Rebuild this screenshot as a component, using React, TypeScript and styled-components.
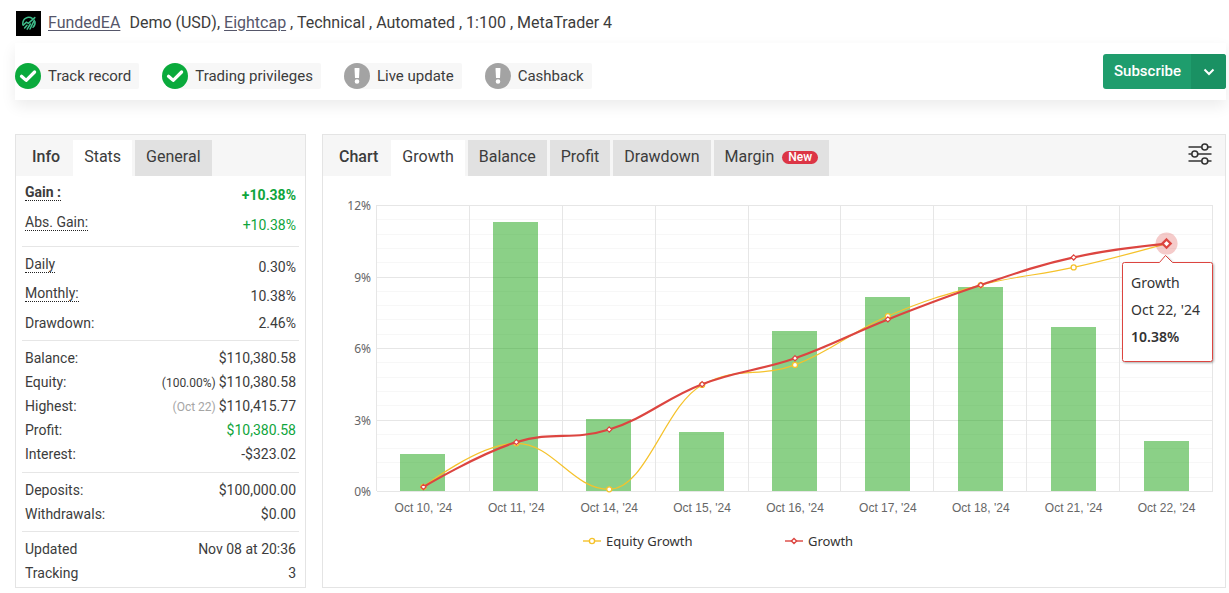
import React from "react";
import styled, { createGlobalStyle, css } from "styled-components";

const GlobalStyle = createGlobalStyle`
  * { box-sizing: border-box; }
  body {
    margin: 0;
    background: #fff;
    color: #3c3c3c;
    font-family: Roboto, "Liberation Sans", sans-serif;
    font-size: 14px;
  }
  button { font: inherit; color: inherit; border: 0; background: none; padding: 0; cursor: pointer; }
`;

const Page = styled.div`
  padding: 0 3px 5px 15px;
`;

const AccountHeader = styled.header`
  display: flex;
  align-items: center;
  height: 43px;
  padding: 3px 0 0 1px;
  font-size: 16px;
  line-height: 20px;
`;

const Summary = styled.p`
  margin: 0;
`;

const AccountLink = styled.a`
  color: #55566a;
  text-decoration: underline;
  text-underline-offset: 2px;
`;

const AccountName = styled(AccountLink)`
  margin: 0 9px 0 7px;
`;

const StatusBar = styled.section`
  display: flex;
  align-items: flex-end;
  justify-content: space-between;
  padding: 11px 0;
  background: #fff;
  box-shadow: 0 6px 14px rgba(0, 0, 0, 0.08);
`;

const Badges = styled.ul`
  display: flex;
  gap: 23px;
  list-style: none;
  margin: 0;
  padding: 0;
`;

const Badge = styled.li`
  display: flex;
  align-items: center;
  gap: 7px;
  height: 26px;
  padding-right: 8px;
  font-size: 15px;
  background: #f7f7f7;
  border-radius: 13px 2px 2px 13px;
`;

const SplitButton = styled.div`
  display: flex;
  height: 35px;
  border-radius: 3px;
  overflow: hidden;
  color: #fff;
  background: #1f9d6d;
`;

const SubscribeButton = styled.button`
  padding: 0 10px 2px 11px;
  font-size: 15px;
  font-weight: 500;
`;

const SubscribeMenu = styled.button`
  display: grid;
  place-items: center;
  width: 35px;
  background: #1a9163;
`;

const Panels = styled.main`
  display: flex;
  gap: 16px;
  margin-top: 34px;
`;

const Panel = styled.section<{ $fixed?: boolean }>`
  ${(p) => (p.$fixed ? css`flex: 0 0 291px;` : css`flex: 1; min-width: 0;`)}
  border: 1px solid #e4e4e4;
`;

const PanelHead = styled.div`
  display: flex;
  align-items: flex-end;
  gap: 3px;
  height: 41px;
  padding: 5px 13px 0 16px;
  background: #f6f6f6;
  font-size: 16px;
`;

const PanelTitle = styled.h2`
  margin: 0 10px 0 0;
  font-size: 16px;
  font-weight: 500;
  line-height: 34px;
  align-self: flex-start;
`;

const Tab = styled.button<{ $active?: boolean }>`
  display: flex;
  align-items: center;
  height: 36px;
  padding: 0 11px 3px;
  background: ${(p) => (p.$active ? "#fff" : "#e1e1e1")};
`;

const NewPill = styled.span`
  margin: 2px 0 0 8px;
  padding: 0 6px;
  border-radius: 7px;
  background: #dc3545;
  color: #fff;
  font-size: 12px;
  font-weight: 500;
  line-height: 13px;
`;

const SettingsButton = styled.button`
  align-self: flex-start;
  margin: 2px 0 0 auto;
  height: 28px;
`;

const Stats = styled.div`
  padding: 1px 6px 2px;
`;

const Group = styled.dl<{ $row: number; $top: number; $bottom: number }>`
  margin: 0;
  padding: ${(p) => p.$top}px 3px ${(p) => p.$bottom}px 3px;
  & + & { border-top: 1px solid #e6e6e6; }
  > div { height: ${(p) => p.$row}px; }
`;

const Row = styled.div<{ $strong?: boolean }>`
  display: flex;
  align-items: center;
  justify-content: space-between;
  line-height: 16px;
  font-weight: ${(p) => (p.$strong ? 700 : 400)};
`;

const Label = styled.dt<{ $hint?: boolean }>`
  border-bottom: ${(p) => (p.$hint ? "1px dotted #222" : "0")};
`;

const Value = styled.dd<{ $green?: boolean; $drop?: number }>`
  margin: 0;
  padding-top: ${(p) => p.$drop ?? 0}px;
  color: ${(p) => (p.$green ? "#0fa53c" : "inherit")};
`;

const Note = styled.small<{ $muted?: boolean }>`
  font-size: 12px;
  color: ${(p) => (p.$muted ? "#a5a5a5" : "inherit")};
`;

const ChartSvg = styled.svg`
  display: block;
  width: 100%;
  height: auto;
`;

const AxisText = styled.text`
  font-family: "Liberation Sans", sans-serif;
  font-size: 12px;
  fill: #666;
`;

const PercentText = styled(AxisText)`
  font-family: "Noto Sans", sans-serif;
`;

const TipText = styled.text<{ $bold?: boolean }>`
  font-family: "Noto Sans", sans-serif;
  font-size: 14px;
  font-weight: ${(p) => (p.$bold ? 600 : 400)};
  fill: #333;
`;

const Legend = styled.div`
  display: flex;
  justify-content: center;
  padding: 10px 0 0 22px;
`;

const LegendItem = styled.button`
  display: flex;
  align-items: center;
  gap: 5px;
  width: 202px;
  font-family: "Noto Sans", sans-serif;
  font-size: 13px;
  line-height: 20px;
  color: #333;
`;

type Item = {
  label: string;
  value: string;
  note?: string;
  muted?: boolean;
  green?: boolean;
  strong?: boolean;
  hint?: boolean;
  drop?: number;
};

const groups: { row: number; top: number; bottom: number; items: Item[] }[] = [
  {
    row: 30, top: 0, bottom: 9,
    items: [
      { label: "Gain :", value: "+10.38%", green: true, strong: true, hint: true, drop: 6 },
      { label: "Abs. Gain:", value: "+10.38%", green: true, hint: true, drop: 6 },
    ],
  },
  {
    row: 29, top: 3, bottom: 3,
    items: [
      { label: "Daily", value: "0.30%", hint: true, drop: 4 },
      { label: "Monthly:", value: "10.38%", hint: true, drop: 4 },
      { label: "Drawdown:", value: "2.46%" },
    ],
  },
  {
    row: 24, top: 5, bottom: 6,
    items: [
      { label: "Balance:", value: "$110,380.58" },
      { label: "Equity:", value: "$110,380.58", note: "(100.00%)" },
      { label: "Highest:", value: "$110,415.77", note: "(Oct 22)", muted: true },
      { label: "Profit:", value: "$10,380.58", green: true },
      { label: "Interest:", value: "-$323.02" },
    ],
  },
  {
    row: 24, top: 5, bottom: 5,
    items: [
      { label: "Deposits:", value: "$100,000.00" },
      { label: "Withdrawals:", value: "$0.00" },
    ],
  },
  {
    row: 24, top: 5, bottom: 0,
    items: [
      { label: "Updated", value: "Nov 08 at 20:36" },
      { label: "Tracking", value: "3" },
    ],
  },
];

const days = [10, 11, 14, 15, 16, 17, 18, 21, 22];
const bars = [1.55, 11.3, 3.02, 2.46, 6.73, 8.15, 8.56, 6.88, 2.1];
const growth = [0.17, 2.05, 2.58, 4.48, 5.57, 7.2, 8.64, 9.8, 10.38];
const equity = [0.17, 2.0, 0.07, 4.45, 5.29, 7.34, 8.64, 9.38, 10.38];

const plot = { left: 54, right: 890, top: 29, bottom: 315 };
const step = (plot.right - plot.left) / days.length;
const xOf = (i: number) => plot.left + step * (i + 0.5);
const yOf = (v: number) => plot.bottom - (v / 12) * (plot.bottom - plot.top);
const crisp = (n: number) => Math.round(n) + 0.5;

/* Smooth curve through the points that never overshoots a neighbour. */
function spline(values: number[]) {
  const pts = values.map((v, i) => ({ x: xOf(i), y: yOf(v) }));
  let out = { ...pts[0] };
  let d = `M${pts[0].x} ${pts[0].y}`;
  for (let i = 1; i < pts.length; i++) {
    const p = pts[i];
    const prev = pts[i - 1];
    const next = pts[i + 1];
    let left = { ...p };
    let right = { ...p };
    if (next) {
      left = { x: (1.5 * p.x + prev.x) / 2.5, y: (1.5 * p.y + prev.y) / 2.5 };
      right = { x: (1.5 * p.x + next.x) / 2.5, y: (1.5 * p.y + next.y) / 2.5 };
      const fix = ((right.y - left.y) * (right.x - p.x)) / (right.x - left.x) + p.y - right.y;
      left.y += fix;
      right.y += fix;
      const clampLeft = Math.min(Math.max(left.y, Math.min(prev.y, p.y)), Math.max(prev.y, p.y));
      if (clampLeft !== left.y) {
        left.y = clampLeft;
        right.y = 2 * p.y - left.y;
      }
      const clampRight = Math.min(Math.max(right.y, Math.min(next.y, p.y)), Math.max(next.y, p.y));
      if (clampRight !== right.y) {
        right.y = clampRight;
        left.y = 2 * p.y - right.y;
      }
    }
    d += `C${out.x} ${out.y} ${left.x} ${left.y} ${p.x} ${p.y}`;
    out = right;
  }
  return d;
}

const diamond = (x: number, y: number, r: number) =>
  `M${x} ${y - r}L${x + r} ${y}L${x} ${y + r}L${x - r} ${y}Z`;

const RED = "#dc4540";
const YELLOW = "#f5c22b";

function GrowthChart() {
  const last = days.length - 1;
  const lx = xOf(last);
  const ly = yOf(growth[last]);
  return (
    <ChartSvg viewBox="0 0 902 345" role="img" aria-label="Growth chart">
      {Array.from({ length: 21 }, (_, k) => {
        const y = crisp(plot.top + (k * (plot.bottom - plot.top)) / 20);
        return (
          <path key={k} d={`M${plot.left} ${y}H${plot.right}`} stroke={k % 5 ? "#f7f7f7" : "#e6e6e6"} />
        );
      })}
      {Array.from({ length: 10 }, (_, k) => (
        <path key={k} d={`M${crisp(plot.left + k * step) - 1} ${plot.top}V${plot.bottom}`} stroke="#e6e6e6" />
      ))}
      {[12, 9, 6, 3, 0].map((v) => (
        <PercentText key={v} x={48} y={yOf(v) + 5} textAnchor="end">{`${v}%`}</PercentText>
      ))}
      {bars.map((v, i) => (
        <rect
          key={i}
          x={Math.round(xOf(i) - 23)}
          y={Math.round(yOf(v))}
          width={45}
          height={plot.bottom - Math.round(yOf(v))}
          fill="#17a10f"
          opacity={0.5}
        />
      ))}
      {days.map((d, i) => (
        <AxisText key={d} x={xOf(i)} y={336} textAnchor="middle">{`Oct ${d}, '24`}</AxisText>
      ))}
      <path d={spline(equity)} fill="none" stroke={YELLOW} strokeWidth={1.2} />
      {equity.map((v, i) => (
        <circle key={i} cx={xOf(i)} cy={yOf(v)} r={2.5} fill="#fff" stroke={YELLOW} strokeWidth={1.3} />
      ))}
      <path d={spline(growth)} fill="none" stroke={RED} strokeWidth={2.2} />
      {growth.slice(0, last).map((v, i) => (
        <path key={i} d={diamond(xOf(i), yOf(v), 2.6)} fill="#fff" stroke={RED} strokeWidth={1.2} />
      ))}
      <circle cx={lx} cy={ly} r={11} fill={RED} opacity={0.28} />
      <path d={diamond(lx, ly, 4.2)} fill="#fff" stroke={RED} strokeWidth={2.2} />
      <g>
        <path
          d="M801.5 86.5H836.5L842.5 79.5L849.5 86.5H887.5Q889.5 86.5 889.5 88.5V183.5Q889.5 185.5 887.5 185.5H801.5Q799.5 185.5 799.5 183.5V88.5Q799.5 86.5 801.5 86.5Z"
          fill="#fff"
          stroke={RED}
          filter="drop-shadow(1px 1px 1px rgba(0,0,0,0.3))"
        />
        <TipText x={808} y={112}>Growth</TipText>
        <TipText x={808} y={139}>Oct 22, '24</TipText>
        <TipText x={808} y={166} $bold>10.38%</TipText>
      </g>
    </ChartSvg>
  );
}

function StatusIcon({ ok }: { ok: boolean }) {
  return (
    <svg width="26" height="26" viewBox="0 0 26 26" aria-hidden="true">
      <circle cx="13" cy="13" r="13" fill={ok ? "#0aaa3c" : "#a3a3a3"} />
      {ok ? (
        <path d="M6.5 13.2L11.2 17.4L19.6 9" fill="none" stroke="#fff" strokeWidth="3.2" strokeLinecap="round" strokeLinejoin="round" />
      ) : (
        <path d="M10.5 5.5Q10.5 5 11 5H15Q15.5 5 15.5 5.5L15 15H11ZM13 16.2A2.3 2.3 0 1 1 13 20.8A2.3 2.3 0 1 1 13 16.2Z" fill="#fff" />
      )}
    </svg>
  );
}

function Logo() {
  return (
    <svg width="25" height="25" viewBox="0 0 25 25" role="img" aria-label="FundedEA logo">
      <rect width="25" height="25" fill="#000" />
      <g fill="none" stroke="#3fbf8c" strokeWidth="1.5" strokeLinecap="round">
        <path d="M16.2 7.4A6 6 0 0 0 6.8 12.5V13.6" />
        <path d="M7.2 14.2L10.4 11.2L12.4 12.4L18.8 6.6" />
        <path d="M8.6 17L11 14.2" />
        <path d="M11.2 18.2L14.4 13" />
        <path d="M14 18L18.4 9.2" />
        <path d="M17 16.2A6 6 0 0 0 18.9 10.4" />
      </g>
    </svg>
  );
}

const badges = [
  { text: "Track record", ok: true },
  { text: "Trading privileges", ok: true },
  { text: "Live update", ok: false },
  { text: "Cashback", ok: false },
];

export default function App() {
  return (
    <>
      <GlobalStyle />
      <Page>
        <AccountHeader>
          <Logo />
          <AccountName href="#">FundedEA</AccountName>
          <Summary>
            Demo (USD), <AccountLink href="#">Eightcap</AccountLink> , Technical , Automated , 1:100 , MetaTrader 4
          </Summary>
        </AccountHeader>
        <StatusBar>
          <Badges>
            {badges.map((b) => (
              <Badge key={b.text}>
                <StatusIcon ok={b.ok} />
                {b.text}
              </Badge>
            ))}
          </Badges>
          <SplitButton>
            <SubscribeButton type="button">Subscribe</SubscribeButton>
            <SubscribeMenu type="button" aria-label="More subscribe options">
              <svg width="12" height="8" viewBox="0 0 12 8" aria-hidden="true">
                <path d="M1.5 1.5L6 6L10.5 1.5" fill="none" stroke="#fff" strokeWidth="2" />
              </svg>
            </SubscribeMenu>
          </SplitButton>
        </StatusBar>
        <Panels>
          <Panel $fixed>
            <PanelHead>
              <PanelTitle>Info</PanelTitle>
              <Tab type="button" $active>Stats</Tab>
              <Tab type="button">General</Tab>
            </PanelHead>
            <Stats>
              {groups.map((g, i) => (
                <Group key={i} $row={g.row} $top={g.top} $bottom={g.bottom}>
                  {g.items.map((it) => (
                    <Row key={it.label} $strong={it.strong}>
                      <Label $hint={it.hint}>{it.label}</Label>
                      <Value $green={it.green} $drop={it.drop}>
                        {it.note && <Note $muted={it.muted}>{it.note} </Note>}
                        {it.value}
                      </Value>
                    </Row>
                  ))}
                </Group>
              ))}
            </Stats>
          </Panel>
          <Panel>
            <PanelHead>
              <PanelTitle>Chart</PanelTitle>
              <Tab type="button" $active>Growth</Tab>
              <Tab type="button">Balance</Tab>
              <Tab type="button">Profit</Tab>
              <Tab type="button">Drawdown</Tab>
              <Tab type="button">
                Margin <NewPill>New</NewPill>
              </Tab>
              <SettingsButton type="button" aria-label="Chart settings">
                <svg width="24" height="24" viewBox="0 0 24 24" fill="none" stroke="#333" strokeWidth="1.6" aria-hidden="true">
                  <path d="M0.5 5H13.5M20 5H23.5M0.5 12H3.5M10 12H23.5M0.5 19H13.5M20 19H23.5" />
                  <circle cx="16.8" cy="5" r="3" />
                  <circle cx="6.8" cy="12" r="3" />
                  <circle cx="16.8" cy="19" r="3" />
                </svg>
              </SettingsButton>
            </PanelHead>
            <GrowthChart />
            <Legend>
              <LegendItem type="button">
                <svg width="18" height="8" viewBox="0 0 18 8" aria-hidden="true">
                  <path d="M0 4H18" stroke={YELLOW} strokeWidth="1.4" />
                  <circle cx="9" cy="4" r="2.6" fill="#fff" stroke={YELLOW} strokeWidth="1.4" />
                </svg>
                Equity Growth
              </LegendItem>
              <LegendItem type="button">
                <svg width="18" height="8" viewBox="0 0 18 8" aria-hidden="true">
                  <path d="M0 4H18" stroke={RED} strokeWidth="1.4" />
                  <path d={diamond(9, 4, 2.6)} fill="#fff" stroke={RED} strokeWidth="1.4" />
                </svg>
                Growth
              </LegendItem>
            </Legend>
          </Panel>
        </Panels>
      </Page>
    </>
  );
}
